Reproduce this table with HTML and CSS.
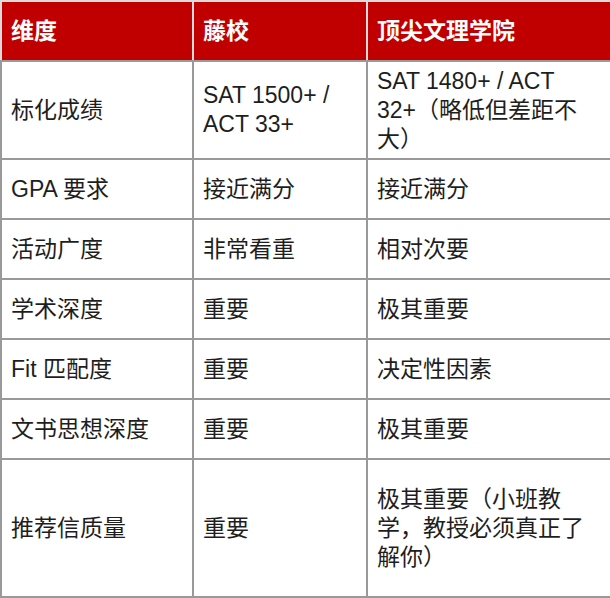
FILE: index.html
```html
<!DOCTYPE html>
<html lang="zh-CN">
<head>
<meta charset="utf-8">
<title>藤校 vs 顶尖文理学院</title>
<link rel="stylesheet" href="styles.css">
</head>
<body>
<table class="cmp">
  <colgroup>
    <col class="c1"><col class="c2"><col class="c3">
  </colgroup>
  <thead>
    <tr class="r-head"><th>维度</th><th>藤校</th><th>顶尖文理学院</th></tr>
  </thead>
  <tbody>
    <tr class="r-mid"><td>标化成绩</td><td>SAT 1500+ / ACT 33+</td><td>SAT 1480+ / ACT 32+（略低但差距不大）</td></tr>
    <tr class="r-one"><td>GPA 要求</td><td>接近满分</td><td>接近满分</td></tr>
    <tr class="r-one"><td>活动广度</td><td>非常看重</td><td>相对次要</td></tr>
    <tr class="r-one"><td>学术深度</td><td>重要</td><td>极其重要</td></tr>
    <tr class="r-one"><td>Fit 匹配度</td><td>重要</td><td>决定性因素</td></tr>
    <tr class="r-one"><td>文书思想深度</td><td>重要</td><td>极其重要</td></tr>
    <tr class="r-tall"><td>推荐信质量</td><td>重要</td><td>极其重要（小班教学，教授必须真正了解你）</td></tr>
  </tbody>
</table>
</body>
</html>
```
FILE: styles.css
```css
html, body {
  margin: 0;
  padding: 0;
  background: #ffffff;
}
.cmp {
  border-collapse: collapse;
  table-layout: fixed;
  width: 610px;
  font-family: "Liberation Sans", "Noto Sans CJK SC", sans-serif;
  font-size: 23px;
  line-height: 29px;
  color: #1e1e1e;
}
.c1 { width: 192px; }
.c2 { width: 174px; }
.c3 { width: 244px; }
.cmp th,
.cmp td {
  padding: 0 20px 0 9px;
  text-align: left;
  vertical-align: middle;
  box-sizing: border-box;
}
.cmp th {
  background: #c00000;
  color: #ffffff;
  font-weight: bold;
  border: 2px solid #dcdcdc;
  border-bottom-color: #999999;
}
.cmp td {
  border: 2px solid #999999;
  background: #ffffff;
}
.r-head th { height: 60px; }
.r-mid td { height: 98px; }
.r-one td { height: 60px; }
.r-tall td { height: 138px; }
```
